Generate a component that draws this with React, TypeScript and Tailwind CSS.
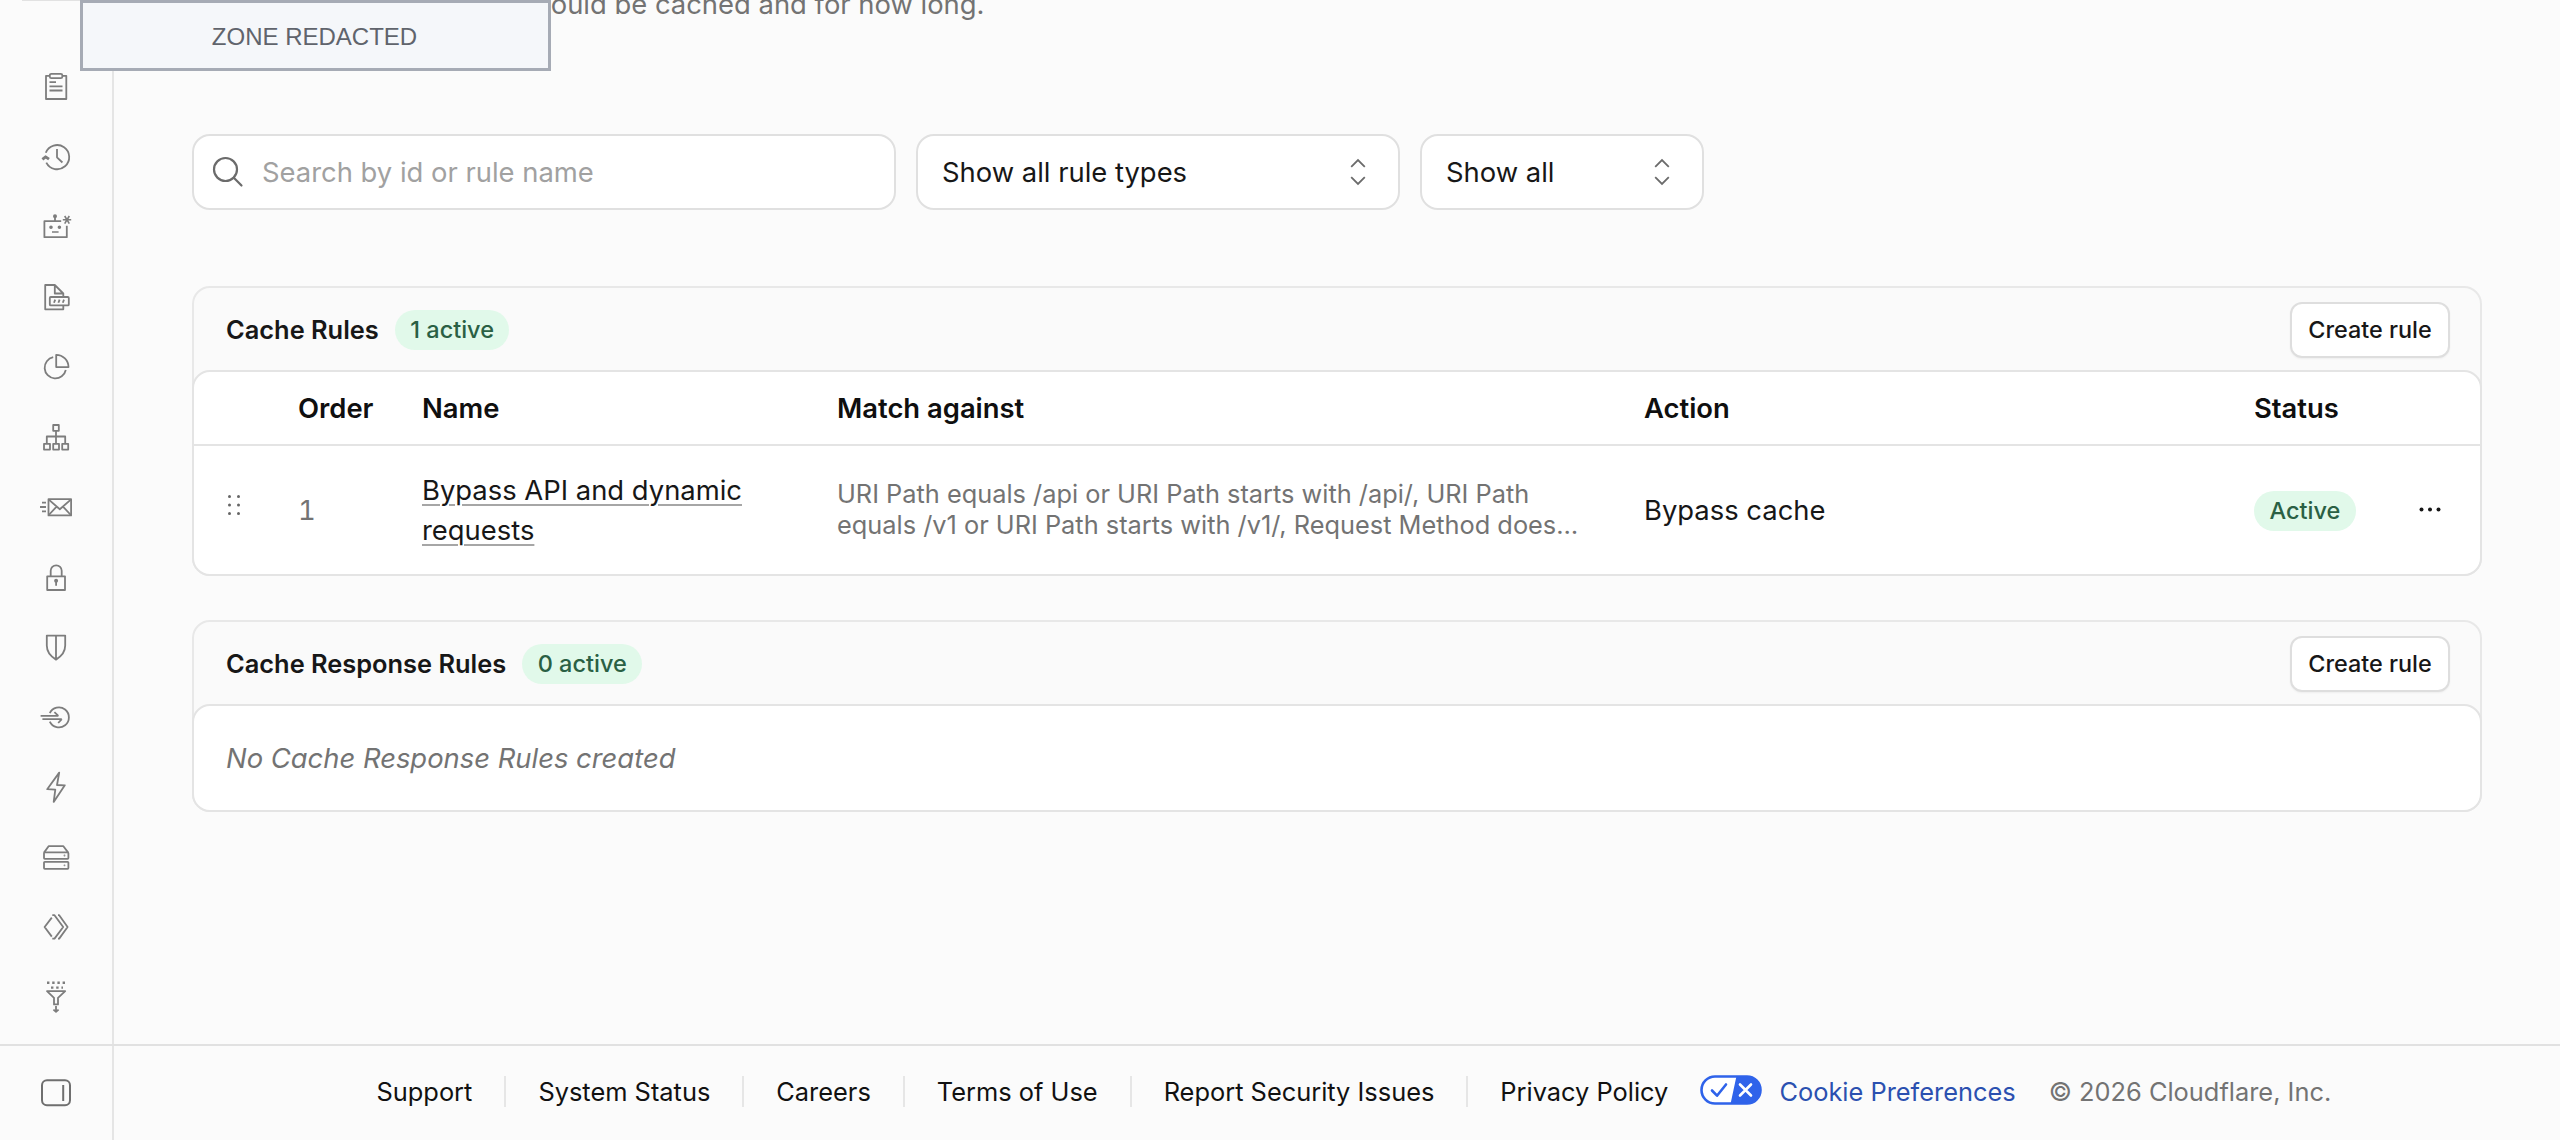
import type { ReactNode } from "react";

function Icon({ children }: { children: ReactNode }) {
  return (
    <button className="flex h-[70px] w-full items-center justify-center text-[#7d7d7d]">
      <svg width="32" height="32" viewBox="0 0 32 32" fill="none" stroke="currentColor" strokeWidth="1.8" strokeLinejoin="round">
        {children}
      </svg>
    </button>
  );
}

function Sidebar() {
  return (
    <aside className="w-[114px] shrink-0 border-r-2 border-[#e5e5e5]">
      <div className="mb-[51px] ml-[22px] h-px bg-[#e2e2e2]" />

      {/* Clipboard */}
      <Icon>
        <path d="M9.5 4.8H6V28h20.3V4.8h-3.8" />
        <rect x="9.8" y="2.8" width="12.5" height="4.4" rx="1.5" />
        <path d="M9.5 11.2h6.5M9.5 15.3h13M9.5 19.5h13" />
      </Icon>

      {/* History */}
      <Icon>
        <path d="M5.8 11.8A12.1 12.1 0 1 1 6.3 21.6" />
        <path d="M2.4 18.4l3.2-2.6 3.4 2.4" strokeWidth="2.8" />
        <path d="M17 8v8.3l5.4 5.2" />
      </Icon>

      {/* Bots */}
      <Icon>
        <path d="M21.2 10.2H4.4V26.2h22.4V14.8M15 10V5.5" />
        <circle cx="15" cy="5.3" r="1.1" fill="currentColor" />
        <circle cx="11" cy="16.3" r=".9" fill="currentColor" />
        <circle cx="19.4" cy="16.3" r=".9" fill="currentColor" />
        <path d="M12 21h6.6M22.8 8.8h8.4M24.7 5l4.6 7.6M29.3 5l-4.6 7.6" strokeWidth="1.6" />
      </Icon>

      {/* Document */}
      <Icon>
        <path d="M23.3 15.5v-3L14.8 4H5.2v24.3h18.1v-3.8M14.8 4v8.5h8.5" />
        <rect x="9.8" y="16" width="19" height="8.4" rx="1" />
        <path d="M14 21.8l1.2-3.2M18.4 21.8l1.2-3.2M22.8 21.8l1.2-3.2" />
      </Icon>

      {/* Pie chart */}
      <Icon>
        <path d="M13.2 6.2A10.7 10.7 0 1 0 25.8 19" />
        <path d="M16.2 3.8V16.1h12.3A12.3 12.3 0 0 0 16.2 3.8z" />
      </Icon>

      {/* Network */}
      <Icon>
        <rect x="13.2" y="4" width="5.6" height="5.8" />
        <rect x="4" y="22.8" width="6" height="5.8" />
        <rect x="13.2" y="22.8" width="5.8" height="5.8" />
        <rect x="22.2" y="22.8" width="6" height="5.8" />
        <path d="M16 9.8v13M6.8 22.8v-7.3h18.4v7.3" />
      </Icon>

      {/* Email */}
      <Icon>
        <rect x="8.5" y="8.2" width="22.6" height="16.2" />
        <path d="M8.8 8.6l11 9.6 11-9.6M8.8 24l7.8-8.4M30.8 24L23 15.6M2 11.7h4M0 16h6M2 20.3h4" />
      </Icon>

      {/* Lock */}
      <Icon>
        <rect x="7.2" y="15.3" width="17.8" height="13.7" />
        <path d="M10.7 15v-5.2a5.5 5.5 0 0 1 11 0V15M16.1 20v4.8" />
        <circle cx="16.1" cy="19.8" r="1.1" fill="currentColor" />
      </Icon>

      {/* Shield */}
      <Icon>
        <path d="M6.8 4.6h18.4v10c0 6-3.4 10.6-9.2 14-5.8-3.4-9.2-8-9.2-14zM16 4.6v24" />
      </Icon>

      {/* Access */}
      <Icon>
        <path d="M9.8 12.2A10 10 0 1 1 9.8 20.6M.6 14.9h17.8M2.4 18.2h19.4M14.4 11.2l4 3.7M21.8 18.2l-3.6 3.8" />
      </Icon>

      {/* Speed */}
      <Icon>
        <path d="M19.2 1.6L7.2 18.2l8.1.5-1.6 12.2L24.8 14.3l-7.8-.3z" />
      </Icon>

      {/* Storage */}
      <Icon>
        <path d="M4 11.6L8.6 5.2h14.8l4.8 6.4" />
        <rect x="4" y="11.4" width="24.4" height="6.4" rx=".8" />
        <rect x="4" y="20.8" width="24.4" height="7" rx=".8" />
        <circle cx="24.5" cy="14.5" r=".3" strokeWidth="1.2" />
        <circle cx="24.5" cy="24.3" r=".3" strokeWidth="1.2" />
      </Icon>

      {/* Workers */}
      <Icon>
        <path d="M11.8 6.6L4.6 16l7.2 9.6M12.3 4.2h2.2L23.2 16l-8.7 11.6h-2.2M18 4.2h1.2L27.6 16l-8.4 11.6H18" />
      </Icon>

      {/* Data filter */}
      <Icon>
        <path d="M7 1.8h18.4M11 6.6h12" strokeWidth="2.4" strokeDasharray="2.4 2.8" />
        <path d="M7 10.2h18.2l-7.2 6.6v6.6h-4v-6.6zM16 25v5.4M13.4 28.6l2.6 2.2 2.6-2.2" />
      </Icon>
    </aside>
  );
}

function Select({ label, className }: { label: string; className: string }) {
  return (
    <button className={"flex h-[76px] items-center justify-between rounded-[18px] border-2 border-[#e0e0e0] bg-white pr-8 pl-6 text-[27.4px] text-[#171717] " + className}>
      <span className="pt-px">{label}</span>
      <svg width="16" height="28" viewBox="0 0 16 28" fill="none" stroke="#6b6b6b" strokeWidth="1.8">
        <path d="M1.2 8.8L8 2l6.8 6.8M1.2 19.2L8 26l6.8-6.8" />
      </svg>
    </button>
  );
}

function Badge({ children }: { children: ReactNode }) {
  return (
    <span className="inline-flex h-10 items-center rounded-full bg-[#e1f9ea] px-[15.5px] text-[23.5px] font-medium text-[#2a6044]">
      {children}
    </span>
  );
}

function RuleCard({ title, count, children }: { title: string; count: string; children: ReactNode }) {
  return (
    <section className="rounded-[18px] border-2 border-[#e8e8e8] bg-[#fafafa]">
      <div className="flex h-[82px] items-center pt-0.5 pr-[30px] pl-8">
        <h2 className="mr-4 text-[25.4px] font-semibold text-[#171717]">{title}</h2>
        <Badge>{count}</Badge>
        <button className="ml-auto h-14 w-[160px] rounded-xl border-2 border-[#dedede] bg-white text-[23.4px] font-medium text-[#171717] shadow-xs">
          Create rule
        </button>
      </div>
      <div className="-mx-0.5 -mb-0.5 rounded-[18px] border-2 border-[#e4e4e4] bg-white">{children}</div>
    </section>
  );
}

const columns = "grid grid-cols-[72px_124px_415px_807px_610px_161px_1fr] items-center pl-8";

const links = ["Support", "System Status", "Careers", "Terms of Use", "Report Security Issues", "Privacy Policy"];

function Footer() {
  return (
    <footer className="flex h-24 border-t-2 border-[#e1e1e1]">
      <div className="flex w-[114px] shrink-0 items-center justify-center border-r-2 border-[#e5e5e5]">
        <svg width="32" height="28" viewBox="0 0 32 28" fill="none" stroke="#6f6f6f" strokeWidth="2">
          <rect x="2" y="1.2" width="28" height="25" rx="5" />
          <path d="M23.2 6v16" />
        </svg>
      </div>
      <div className="flex h-[92px] items-center pl-[262.5px] text-[25.4px] whitespace-nowrap text-[#111]">
        {links.map((link, i) => (
          <div key={link} className="flex items-center">
            {i > 0 && <span className="mx-8 h-[31px] w-0.5 bg-[#e6e6e6]" />}
            <a href="#">{link}</a>
          </div>
        ))}
        <a href="#" className="ml-8 flex items-center gap-[17px] text-[#2b50b0]">
          <svg className="-mt-1" width="62" height="30" viewBox="0 0 62 30" fill="none">
            <rect x="1.5" y="1.5" width="59" height="27" rx="13.5" fill="#fff" />
            <path d="M36.5 1H47a14 14 0 0 1 0 28H30.5z" fill="#2f63ea" />
            <rect x="1.5" y="1.5" width="59" height="27" rx="13.5" stroke="#2f63ea" strokeWidth="2.6" />
            <path d="M12 15.5l5 5.2L26 9.5" stroke="#2f63ea" strokeWidth="2.6" strokeLinecap="round" strokeLinejoin="round" />
            <path d="M40 9.5l11 11M51 9.5l-11 11" stroke="#fff" strokeWidth="2.6" strokeLinecap="round" />
          </svg>
          Cookie Preferences
        </a>
        <span className="ml-[33px] text-[#737373]">© 2026 Cloudflare, Inc.</span>
      </div>
    </footer>
  );
}

function App() {
  return (
    <div className="relative flex h-[1140px] w-[2560px] flex-col overflow-hidden bg-[#fbfbfb] font-['Inter',sans-serif]">

      <div className="flex h-[1044px]">
        <Sidebar />

        <main className="flex-1 overflow-hidden pr-[78px] pl-[78px]">
          <p className="-mt-4 w-[792.5px] text-right text-[27.4px] leading-10 text-[#737373]">
            should be cached and for how long.
          </p>

          {/* Filters */}
          <div className="mt-[110px] flex gap-5">
            <div className="flex h-[76px] w-[704px] items-center gap-[18px] rounded-[18px] border-2 border-[#e0e0e0] bg-white pl-[18px]">
              <svg width="32" height="32" viewBox="0 0 32 32" fill="none" stroke="#6b6b6b" strokeWidth="2.2" strokeLinecap="round">
                <circle cx="13.5" cy="13.5" r="11.5" />
                <path d="M21.8 21.8L29.5 29.5" />
              </svg>
              <input
                className="w-[600px] pt-px text-[27.4px] outline-none placeholder:text-[#a1a1a1]"
                placeholder="Search by id or rule name"
              />
            </div>
            <Select label="Show all rule types" className="w-[484px]" />
            <Select label="Show all" className="w-[284px]" />
          </div>

          {/* Rule lists */}
          <div className="mt-[76px] flex flex-col gap-11">
            <RuleCard title="Cache Rules" count="1 active">
              <div className={columns + " h-[74px] border-b-2 border-[#e4e4e4] pt-px text-[27.4px] font-semibold text-[#0f0f0f]"}>
                <span />
                <span>Order</span>
                <span>Name</span>
                <span>Match against</span>
                <span>Action</span>
                <span>Status</span>
              </div>
              <div className={columns + " h-32 text-[27.4px] text-[#171717]"}>
                <svg className="-mt-2.5" width="18" height="24" viewBox="0 0 18 24" fill="#666">
                  <circle cx="3.5" cy="3.5" r="1.5" />
                  <circle cx="12.5" cy="3.5" r="1.5" />
                  <circle cx="3.5" cy="12" r="1.5" />
                  <circle cx="12.5" cy="12" r="1.5" />
                  <circle cx="3.5" cy="20.5" r="1.5" />
                  <circle cx="12.5" cy="20.5" r="1.5" />
                </svg>
                <span className="pt-px text-[#737373] tabular-nums">1</span>
                <a href="#" className="w-[350px] leading-10 underline decoration-[#a6a6a6] decoration-2 underline-offset-4">
                  Bypass API and dynamic requests
                </a>
                <p className="-mt-0.5 text-[25.35px] leading-[31.5px] whitespace-nowrap text-[#737373]">
                  URI Path equals /api or URI Path starts with /api/, URI Path
                  <br />
                  equals /v1 or URI Path starts with /v1/, Request Method does…
                </p>
                <span className="pt-px">Bypass cache</span>
                <span className="flex pt-0.5">
                  <Badge>Active</Badge>
                </span>
                <svg width="32" height="8" viewBox="0 0 32 8" fill="#171717">
                  <circle cx="6.5" cy="3.5" r="2" />
                  <circle cx="15" cy="3.5" r="2" />
                  <circle cx="23.5" cy="3.5" r="2" />
                </svg>
              </div>
            </RuleCard>

            <RuleCard title="Cache Response Rules" count="0 active">
              <p className="flex h-[104px] items-center pt-px pl-8 text-[27.4px] text-[#737373] italic">
                No Cache Response Rules created
              </p>
            </RuleCard>
          </div>
        </main>
      </div>

      <Footer />

      {/* Redaction label over the zone name */}
      <div className="absolute top-0 left-20 flex h-[71px] w-[471px] items-center justify-center border-3 border-[#a6abb5] bg-[#f5f7fa] pt-0.5 pr-0.5 font-['Liberation_Sans',sans-serif] text-2xl text-[#60646c]">
        ZONE REDACTED
      </div>
    </div>
  );
}

export default App;
